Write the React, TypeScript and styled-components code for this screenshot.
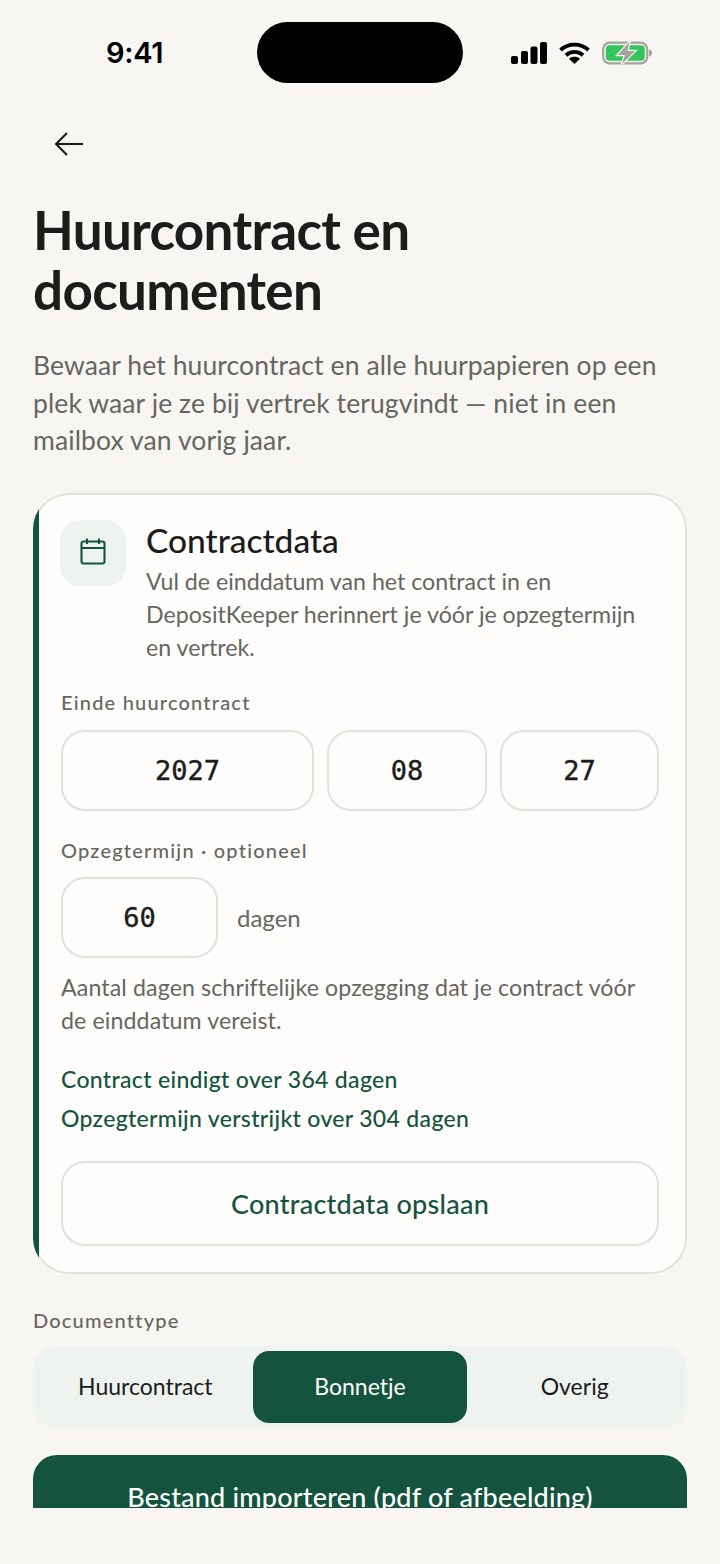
import React from "react";
import styled, { createGlobalStyle } from "styled-components";

const GlobalStyle = createGlobalStyle`
  html, body {
    margin: 0;
    padding: 0;
    background: #f7f6f2;
  }
  * {
    box-sizing: border-box;
  }
`;

const Screen = styled.div`
  width: 720px;
  height: 1564px;
  background: #f7f6f2;
  font-family: "Lato", "Noto Sans", sans-serif;
  color: #1c1c1a;
  overflow: hidden;
`;

const StatusBar = styled.div`
  display: grid;
  grid-template-columns: 1fr 206px 1fr;
  height: 106px;
  padding-top: 22px;
`;

const Time = styled.div`
  font-family: "Inter", sans-serif;
  font-weight: 600;
  font-size: 29px;
  line-height: 61px;
  color: #000;
  padding-left: 106px;
  letter-spacing: -0.3px;
`;

const Island = styled.div`
  height: 61px;
  background: #000;
  border-radius: 31px;
`;

const StatusIcons = styled.div`
  display: flex;
  align-items: center;
  height: 61px;
  padding-left: 48px;
  gap: 12px;
`;

const Content = styled.div`
  height: 1402px;
  padding: 0 33px;
  overflow: hidden;
`;

const BackButton = styled.div`
  height: 76px;
  display: flex;
  align-items: center;
  padding-left: 22px;
`;

const Title = styled.h1`
  margin: 18px 0 0;
  font-size: 53px;
  line-height: 60px;
  font-weight: 700;
  letter-spacing: -0.67px;
  color: #1c1c1a;
`;

const Lead = styled.p`
  margin: 27px 0 0;
  font-size: 26.5px;
  line-height: 37.5px;
  letter-spacing: 0.1px;
  color: #666661;
`;

const Card = styled.section`
  position: relative;
  overflow: hidden;
  margin-top: 33px;
  padding: 27px 28px 28px;
  background: #fefdfb;
  box-shadow: inset 0 0 0 2px #e2e1dc;
  border-radius: 36px;
  &::before {
    content: "";
    position: absolute;
    top: 0;
    bottom: 0;
    left: 0;
    width: 6px;
    background: #14543f;
  }
`;

const CardHead = styled.div`
  display: flex;
  gap: 20px;
  align-items: flex-start;
`;

const IconTile = styled.div`
  width: 66px;
  height: 66px;
  flex: none;
  margin-left: -1px;
  padding-bottom: 2px;
  border-radius: 20px;
  background: #eef3f0;
  display: flex;
  align-items: center;
  justify-content: center;
`;

const CardTitle = styled.h2`
  margin: 0;
  font-size: 33.5px;
  line-height: 40px;
  font-weight: 500;
  color: #1c1c1a;
`;

const CardText = styled.p`
  margin: 5px 0 0;
  font-size: 23.2px;
  line-height: 33px;
  color: #666661;
`;

const Label = styled.div`
  font-size: 20px;
  line-height: 28px;
  font-weight: 500;
  letter-spacing: 1.2px;
  color: #666661;
`;

const DateLabel = styled(Label)`
  margin-top: 24px;
`;

const TermLabel = styled(Label)`
  margin-top: 25px;
`;

const DateRow = styled.div`
  display: grid;
  grid-template-columns: 1fr 160px 159px;
  gap: 13px;
  margin-top: 14px;
`;

const Field = styled.div<{ $width?: number }>`
  height: 81px;
  ${(p) => (p.$width ? `width: ${p.$width}px;` : "")}
  border: 2px solid #e2e1dc;
  border-radius: 24px;
  background: #fefdfb;
  display: flex;
  align-items: center;
  justify-content: center;
  font-family: "DejaVu Sans Mono", monospace;
  font-size: 27px;
  -webkit-text-stroke: 0.4px #1c1c1a;
  color: #1c1c1a;
`;

const TermRow = styled.div`
  display: flex;
  align-items: center;
  gap: 19px;
  margin-top: 13px;
`;

const Unit = styled.span`
  font-size: 24px;
  color: #666661;
`;

const Hint = styled.p`
  margin: 13px 0 0;
  font-size: 23.2px;
  line-height: 33px;
  letter-spacing: 0.1px;
  color: #666661;
`;

const Countdown = styled.div<{ $gap: number }>`
  margin-top: ${(p) => p.$gap}px;
  font-size: 23px;
  line-height: 33px;
  font-weight: 500;
  letter-spacing: 0.32px;
  color: #14543f;
`;

const OutlineButton = styled.div`
  margin-top: 26px;
  height: 85px;
  border: 2px solid #e2e1dc;
  border-radius: 24px;
  display: flex;
  align-items: center;
  justify-content: center;
  font-size: 27px;
  font-weight: 500;
  letter-spacing: 0.25px;
  color: #14543f;
`;

const SectionLabel = styled(Label)`
  margin-top: 32px;
`;

const Segments = styled.div`
  margin-top: 12px;
  height: 82px;
  padding: 5px;
  border-radius: 24px;
  background: #eef3f0;
  display: grid;
  grid-template-columns: repeat(3, 1fr);
`;

const Segment = styled.div<{ $active?: boolean }>`
  border-radius: 16px;
  display: flex;
  align-items: center;
  justify-content: center;
  padding-bottom: 1px;
  font-size: 23px;
  color: ${(p) => (p.$active ? "#fefdfb" : "#1c1c1a")};
  background: ${(p) => (p.$active ? "#14543f" : "transparent")};
`;

const PrimaryButton = styled.div`
  margin-top: 27px;
  height: 84px;
  border-radius: 24px;
  background: #14543f;
  color: #fefdfb;
  display: flex;
  align-items: center;
  justify-content: center;
  font-size: 27px;
  font-weight: 500;
  letter-spacing: 0.2px;
`;

const SignalIcon = () => (
  <svg width="36" height="22" viewBox="0 0 36 22" fill="#000">
    <rect x="0" y="14" width="7" height="8" rx="2" />
    <rect x="10" y="9" width="7" height="13" rx="2" />
    <rect x="19.5" y="4.5" width="7" height="17.5" rx="2" />
    <rect x="29" y="0" width="7" height="22" rx="2" />
  </svg>
);

const WifiIcon = () => (
  <svg width="31" height="22" viewBox="0 0 31 22" fill="none" stroke="#000" strokeWidth="3.8">
    <path d="M1.5 8 C9.5 0.8 21.5 0.8 29.5 8" />
    <path d="M7 13.2 C12 8.8 19 8.8 24 13.2" />
    <path d="M15.5 22 L10 16.8 C13 14.2 18 14.2 21 16.8 Z" fill="#000" stroke="none" />
  </svg>
);

const BatteryIcon = () => (
  <svg width="50" height="24" viewBox="0 0 50 24">
    <rect x="1.2" y="1.7" width="44" height="20.6" rx="6.5" fill="none" stroke="#a3a39f" strokeWidth="2.2" />
    <rect x="3.8" y="4.2" width="39" height="15.6" rx="4" fill="#34c45c" />
    <path d="M47 8.5 C48.8 9 50 10.2 50 12 C50 13.8 48.8 15 47 15.5 Z" fill="#a3a39f" />
    <path d="M27.5 1 L15.5 14 H23 L20 23 L33 10 H25.5 Z" fill="#a3a39f" stroke="#f7f6f2" strokeWidth="2.4" paintOrder="stroke" />
  </svg>
);

const BackArrow = () => (
  <svg width="28" height="24" viewBox="0 0 28 24" fill="none" stroke="#1c1c1a" strokeWidth="2.1">
    <path d="M1 12 H28" />
    <path d="M12 1 L1 12 L12 23" />
  </svg>
);

const CalendarIcon = () => (
  <svg width="26" height="27" viewBox="0 0 26 27" fill="none" stroke="#14543f" strokeWidth="2.1">
    <rect x="1.5" y="3.5" width="23" height="22" rx="2" />
    <path d="M1.5 10 H24.5" />
    <path d="M7 0.5 V6" />
    <path d="M19 0.5 V6" />
  </svg>
);

const App: React.FC = () => {
  return (
    <Screen>
      <GlobalStyle />
      <StatusBar>
        <Time>9:41</Time>
        <Island />
        <StatusIcons>
          <SignalIcon />
          <WifiIcon />
          <BatteryIcon />
        </StatusIcons>
      </StatusBar>
      <Content>
        <BackButton>
          <BackArrow />
        </BackButton>
        <Title>
          Huurcontract en
          <br />
          documenten
        </Title>
        <Lead>
          Bewaar het huurcontract en alle huurpapieren op een plek waar je ze bij vertrek terugvindt — niet in een
          mailbox van vorig jaar.
        </Lead>
        <Card>
          <CardHead>
            <IconTile>
              <CalendarIcon />
            </IconTile>
            <div>
              <CardTitle>Contractdata</CardTitle>
              <CardText>
                Vul de einddatum van het contract in en DepositKeeper herinnert je vóór je opzegtermijn en vertrek.
              </CardText>
            </div>
          </CardHead>
          <DateLabel>Einde huurcontract</DateLabel>
          <DateRow>
            <Field>2027</Field>
            <Field>08</Field>
            <Field>27</Field>
          </DateRow>
          <TermLabel>Opzegtermijn · optioneel</TermLabel>
          <TermRow>
            <Field $width={157}>60</Field>
            <Unit>dagen</Unit>
          </TermRow>
          <Hint>Aantal dagen schriftelijke opzegging dat je contract vóór de einddatum vereist.</Hint>
          <Countdown $gap={26}>Contract eindigt over 364 dagen</Countdown>
          <Countdown $gap={6}>Opzegtermijn verstrijkt over 304 dagen</Countdown>
          <OutlineButton>Contractdata opslaan</OutlineButton>
        </Card>
        <SectionLabel>Documenttype</SectionLabel>
        <Segments>
          <Segment>Huurcontract</Segment>
          <Segment $active>Bonnetje</Segment>
          <Segment>Overig</Segment>
        </Segments>
        <PrimaryButton>Bestand importeren (pdf of afbeelding)</PrimaryButton>
      </Content>
    </Screen>
  );
};

export default App;
